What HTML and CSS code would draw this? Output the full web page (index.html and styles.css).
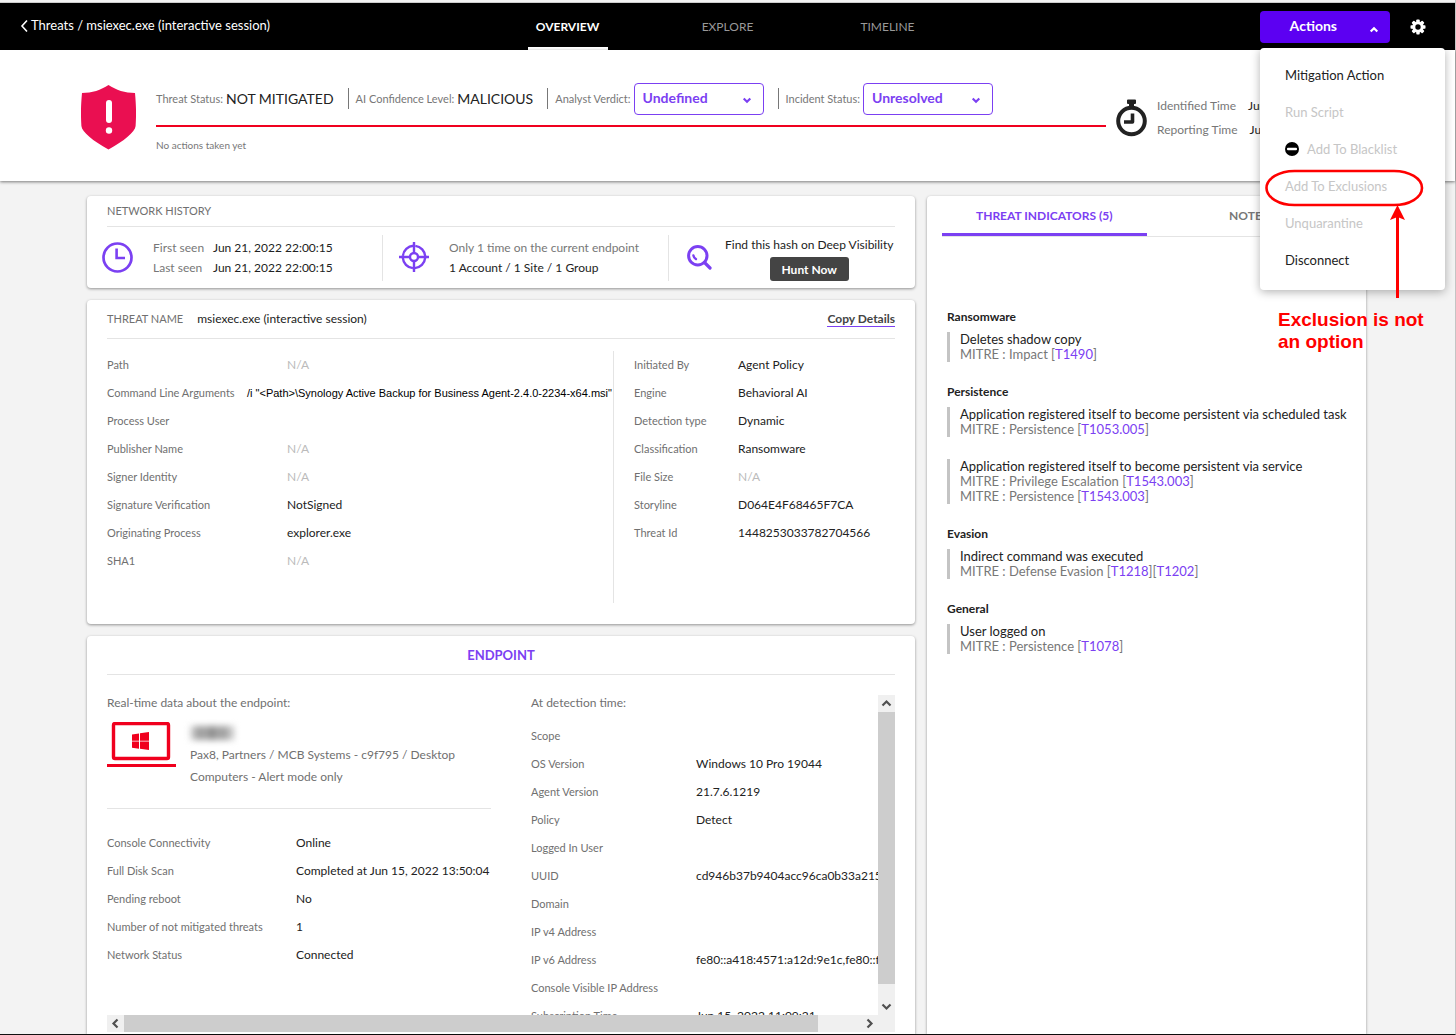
FILE: index.html
```html
<!DOCTYPE html>
<html lang="en">
<head>
    <meta charset="UTF-8">
    <title>Threats / msiexec.exe (interactive session)</title>
    <meta name="viewport" content="width=device-width">
    <link rel="stylesheet" href="styles.css">
</head>
<body>
    <div class="page">
        <header class="topbar">
            <a class="breadcrumb" href="#">
                <svg width="8" height="14" viewBox="0 0 8 14"><path d="M7 1.5 2 7l5 5.5" fill="none" stroke="#fff" stroke-width="1.6"/></svg>
                <span>Threats / msiexec.exe (interactive session)</span>
            </a>
            <nav class="main-tabs">
                <a class="active" href="#overview">OVERVIEW</a>
                <a href="#explore">EXPLORE</a>
                <a href="#timeline">TIMELINE</a>
            </nav>
            <div class="tools">
                <div class="actions">
                    <button class="actions-btn" type="button">
                        <span>Actions</span>
                        <svg width="10" height="7" viewBox="0 0 10 7"><path d="M1.7 5.5 5 2.3l3.3 3.2" fill="none" stroke="#fff" stroke-width="2.2"/></svg>
                    </button>
                    <div class="menu">
                        <button type="button">Mitigation Action</button>
                        <button type="button" disabled>Run Script</button>
                        <button type="button" disabled>
                            <svg width="14" height="14" viewBox="0 0 14 14"><circle cx="7" cy="7" r="7" fill="#000"/><rect x="2" y="5.7" width="10" height="2.6" rx="1" fill="#fff"/></svg>
                            Add To Blacklist
                        </button>
                        <button type="button" disabled>Add To Exclusions</button>
                        <button type="button" disabled>Unquarantine</button>
                        <button type="button">Disconnect</button>
                        <!-- callout drawn over the menu -->
                        <svg class="callout" width="160" height="132" viewBox="0 0 160 132" fill="none" stroke="#f00">
                            <rect x="1.5" y="2" width="155.500" height="34" rx="28" ry="17" stroke-width="2.600"/>
                            <path d="M132.500 129V48" stroke-width="3"/>
                            <path d="M132.500 36l7.500 15-7.500-3-7.500 3z" fill="#f00" stroke="none"/>
                        </svg>
                        <p class="callout-text">Exclusion is not<br>an option</p>
                    </div>
                </div>
                <button class="gear" type="button" aria-label="Settings">
                    <svg width="16" height="16" viewBox="0 0 16 16">
                        <g fill="#fff">
                            <rect x="6.3" y=".5" width="3.4" height="15" rx=".8"/>
                            <rect x="6.3" y=".5" width="3.4" height="15" rx=".8" transform="rotate(45 8 8)"/>
                            <rect x="6.3" y=".5" width="3.4" height="15" rx=".8" transform="rotate(90 8 8)"/>
                            <rect x="6.3" y=".5" width="3.4" height="15" rx=".8" transform="rotate(135 8 8)"/>
                            <circle cx="8" cy="8" r="5.7"/>
                        </g>
                        <circle cx="8" cy="8" r="2.7" fill="#000"/>
                    </svg>
                </button>
            </div>
        </header>

        <section class="summary">
            <svg class="shield" width="55" height="65" viewBox="0 0 55 65">
                <path d="M27.5 0C20 5 11 8 1 8c-1.200 13-1.300 22-.6 33C1 47 12 56 27.500 64.500 43 56 54 47 54.600 41c.7-11 .6-20-.6-33C44 8 35 5 27.500 0z" fill="#ea0f51"/>
                <rect x="25" y="15" width="6" height="23" rx="3" fill="#fff"/>
                <circle cx="28" cy="45.500" r="3.200" fill="#fff"/>
            </svg>
            <div class="status">
                <div class="status-row">
                    <div class="status-item"><span>Threat Status:</span><strong>NOT MITIGATED</strong></div>
                    <div class="status-item"><span>AI Confidence Level:</span><strong>MALICIOUS</strong></div>
                    <div class="status-item">
                        <label for="verdict">Analyst Verdict:</label>
                        <div class="select">
                            <select id="verdict"><option>Undefined</option><option>True positive</option></select>
                            <svg width="10" height="7" viewBox="0 0 10 7"><path d="M1.7 1.5 5 4.7l3.3-3.2" fill="none" stroke="#7b40f2" stroke-width="2.2"/></svg>
                        </div>
                    </div>
                    <div class="status-item">
                        <label for="incident">Incident Status:</label>
                        <div class="select">
                            <select id="incident"><option>Unresolved</option><option>Resolved</option></select>
                            <svg width="10" height="7" viewBox="0 0 10 7"><path d="M1.7 1.5 5 4.7l3.3-3.2" fill="none" stroke="#7b40f2" stroke-width="2.2"/></svg>
                        </div>
                    </div>
                </div>
                <p class="taken">No actions taken yet</p>
            </div>
            <div class="times">
                <svg width="31" height="38" viewBox="0 0 31 38">
                    <path d="M12 .5h7q1 0 1 1V4q0 1-1 1h-1v3h-5V5h-1q-1 0-1-1V1.500q0-1 1-1z" fill="#222"/>
                    <circle cx="15.500" cy="22" r="13.300" fill="none" stroke="#222" stroke-width="4"/>
                    <path d="M16.500 14.500V23H8" fill="none" stroke="#222" stroke-width="3.600" stroke-linejoin="round"/>
                </svg>
                <dl>
                    <div><dt>Identified Time</dt><dd>Jun 21, 2022 22:00:15</dd></div>
                    <div><dt>Reporting Time</dt><dd>Jun 21, 2022 22:00:15</dd></div>
                </dl>
            </div>
        </section>

        <main class="content">
            <div class="column">
                <section class="card network">
                    <h2 class="card-title">NETWORK HISTORY</h2>
                    <div class="network-row">
                        <div class="network-item">
                            <svg width="31" height="31" viewBox="0 0 31 31" fill="none" stroke="#7b40f2">
                                <circle cx="15.500" cy="15.500" r="14" stroke-width="2.700"/>
                                <path d="M14.600 6.500V16H23" stroke-width="2.600"/>
                            </svg>
                            <dl class="seen">
                                <dt>First seen</dt><dd>Jun 21, 2022 22:00:15</dd>
                                <dt>Last seen</dt><dd>Jun 21, 2022 22:00:15</dd>
                            </dl>
                        </div>
                        <div class="network-item">
                            <svg width="30" height="30" viewBox="0 0 30 30" fill="none" stroke="#7b40f2" stroke-width="2.400">
                                <circle cx="15" cy="15" r="11.200" stroke-dasharray="15.600 2" stroke-dashoffset="-1"/>
                                <circle cx="15" cy="15" r="4"/>
                                <path d="M15 0v11M15 19v11M0 15h11M19 15h11"/>
                            </svg>
                            <p>Only 1 time on the current endpoint<br><b>1 Account / 1 Site / 1 Group</b></p>
                        </div>
                        <div class="network-item hunt">
                            <svg width="25" height="25" viewBox="0 0 25 25" fill="none" stroke="#7b40f2" stroke-linecap="round">
                                <circle cx="10.800" cy="10.800" r="9.200" stroke-width="3"/>
                                <path d="M17.500 17.500l5.500 5.500" stroke-width="3.200"/>
                                <path d="M6.400 10.500q.5 2.500 2.600 3.600" stroke-width="2.400"/>
                            </svg>
                            <div>
                                <p>Find this hash on Deep Visibility</p>
                                <button type="button">Hunt Now</button>
                            </div>
                        </div>
                    </div>
                </section>

                <section class="card threat">
                    <div class="threat-head">
                        <h2>THREAT NAME</h2>
                        <span>msiexec.exe (interactive session)</span>
                        <a href="#copy">Copy Details</a>
                    </div>
                    <div class="threat-body">
                        <dl class="fields file-fields">
                            <div><dt>Path</dt><dd class="na">N/A</dd></div>
                            <div class="command"><dt>Command Line Arguments</dt><dd>/i "&lt;Path&gt;\Synology Active Backup for Business Agent-2.4.0-2234-x64.msi"</dd></div>
                            <div><dt>Process User</dt><dd></dd></div>
                            <div><dt>Publisher Name</dt><dd class="na">N/A</dd></div>
                            <div><dt>Signer Identity</dt><dd class="na">N/A</dd></div>
                            <div><dt>Signature Verification</dt><dd>NotSigned</dd></div>
                            <div><dt>Originating Process</dt><dd>explorer.exe</dd></div>
                            <div><dt>SHA1</dt><dd class="na">N/A</dd></div>
                        </dl>
                        <dl class="fields engine-fields">
                            <div><dt>Initiated By</dt><dd>Agent Policy</dd></div>
                            <div><dt>Engine</dt><dd>Behavioral AI</dd></div>
                            <div><dt>Detection type</dt><dd>Dynamic</dd></div>
                            <div><dt>Classification</dt><dd>Ransomware</dd></div>
                            <div><dt>File Size</dt><dd class="na">N/A</dd></div>
                            <div><dt>Storyline</dt><dd>D064E4F68465F7CA</dd></div>
                            <div><dt>Threat Id</dt><dd>1448253033782704566</dd></div>
                        </dl>
                    </div>
                </section>

                <section class="card endpoint">
                    <h2>ENDPOINT</h2>
                    <div class="scroller">
                        <div class="scroll-view">
                            <div class="realtime">
                                <h3>Real-time data about the endpoint:</h3>
                                <div class="machine">
                                    <svg width="69" height="46" viewBox="0 0 69 46">
                                        <rect x="6.500" y="1.500" width="55" height="35" rx="1.500" fill="none" stroke="#f0001e" stroke-width="3.400"/>
                                        <rect y="42" width="69" height="3" fill="#f0001e"/>
                                        <path d="M25 12.500l7-1v7.200h-7zM33 11.300l9-1.300v8.700h-9zM25 19.500h7v7.200l-7-1zM33 19.500h9V28l-9-1.300z" fill="#f0001e"/>
                                    </svg>
                                    <div>
                                        <span class="redacted"></span>
                                        <p>Pax8, Partners / MCB Systems - c9f795 / Desktop Computers - Alert mode only</p>
                                    </div>
                                </div>
                                <dl class="fields console-fields">
                                    <div><dt>Console Connectivity</dt><dd>Online</dd></div>
                                    <div><dt>Full Disk Scan</dt><dd>Completed at Jun 15, 2022 13:50:04</dd></div>
                                    <div><dt>Pending reboot</dt><dd>No</dd></div>
                                    <div><dt>Number of not mitigated threats</dt><dd>1</dd></div>
                                    <div><dt>Network Status</dt><dd>Connected</dd></div>
                                </dl>
                            </div>
                            <div class="detection">
                                <h3>At detection time:</h3>
                                <dl class="fields detection-fields">
                                    <div><dt>Scope</dt><dd></dd></div>
                                    <div><dt>OS Version</dt><dd>Windows 10 Pro 19044</dd></div>
                                    <div><dt>Agent Version</dt><dd>21.7.6.1219</dd></div>
                                    <div><dt>Policy</dt><dd>Detect</dd></div>
                                    <div><dt>Logged In User</dt><dd></dd></div>
                                    <div><dt>UUID</dt><dd>cd946b37b9404acc96ca0b33a215</dd></div>
                                    <div><dt>Domain</dt><dd></dd></div>
                                    <div><dt>IP v4 Address</dt><dd></dd></div>
                                    <div><dt>IP v6 Address</dt><dd>fe80::a418:4571:a12d:9e1c,fe80::f</dd></div>
                                    <div><dt>Console Visible IP Address</dt><dd></dd></div>
                                    <div><dt>Subscription Time</dt><dd>Jun 15, 2022 11:09:21</dd></div>
                                </dl>
                            </div>
                        </div>
                        <div class="bar vertical">
                            <svg width="17" height="17" viewBox="0 0 17 17"><path d="M4.500 10.500l4-4 4 4" fill="none" stroke="#505050" stroke-width="2.200"/></svg>
                            <div class="thumb"></div>
                            <svg width="17" height="17" viewBox="0 0 17 17"><path d="M4.500 6.500l4 4 4-4" fill="none" stroke="#505050" stroke-width="2.200"/></svg>
                        </div>
                        <div class="bar horizontal">
                            <svg width="17" height="17" viewBox="0 0 17 17"><path d="M10.500 4.500l-4 4 4 4" fill="none" stroke="#505050" stroke-width="2.200"/></svg>
                            <div class="thumb"></div>
                            <svg width="17" height="17" viewBox="0 0 17 17"><path d="M6.500 4.500l4 4-4 4" fill="none" stroke="#505050" stroke-width="2.200"/></svg>
                        </div>
                    </div>
                </section>
            </div>

            <section class="card indicators">
                <nav class="side-tabs">
                    <a class="active" href="#indicators">THREAT INDICATORS (5)</a>
                    <a href="#notes">NOTES</a>
                </nav>
                <div class="indicator-list">
                    <h3>Ransomware</h3>
                    <div class="indicator">
                        <p>Deletes shadow copy</p>
                        <p class="mitre">MITRE : Impact [<a href="#T1490">T1490</a>]</p>
                    </div>
                    <h3>Persistence</h3>
                    <div class="indicator">
                        <p>Application registered itself to become persistent via scheduled task</p>
                        <p class="mitre">MITRE : Persistence [<a href="#T1053">T1053.005</a>]</p>
                    </div>
                    <div class="indicator">
                        <p>Application registered itself to become persistent via service</p>
                        <p class="mitre">MITRE : Privilege Escalation [<a href="#T1543">T1543.003</a>]</p>
                        <p class="mitre">MITRE : Persistence [<a href="#T1543">T1543.003</a>]</p>
                    </div>
                    <h3>Evasion</h3>
                    <div class="indicator">
                        <p>Indirect command was executed</p>
                        <p class="mitre">MITRE : Defense Evasion [<a href="#T1218">T1218</a>][<a href="#T1202">T1202</a>]</p>
                    </div>
                    <h3>General</h3>
                    <div class="indicator">
                        <p>User logged on</p>
                        <p class="mitre">MITRE : Persistence [<a href="#T1078">T1078</a>]</p>
                    </div>
                </div>
            </section>
        </main>
    </div>
</body>
</html>
```
FILE: styles.css
```css
*{
    box-sizing: border-box;
}
body{
    margin: 0;
    background-color: #f3f3f3;
    color: #222;
    font-family: Lato, sans-serif;
    font-size: 12px;
    line-height: 16px;
}
h2, h3, p, dl, dd{
    margin: 0;
    font-size: inherit;
    font-weight: normal;
}
a{
    color: inherit;
    text-decoration: none;
}
button, select{
    font-family: inherit;
    font-size: inherit;
    border: 0;
}
svg{
    display: block;
    flex: none;
}
.page{
    min-height: 100vh;
    display: flex;
    flex-direction: column;
    padding-top: 2px;
    border-right: 1px solid #c4c4c4;
    border-bottom: 1px solid #111;
}

/* top bar */
.topbar{
    display: grid;
    grid-template-columns: 1fr auto 1fr;
    height: 48px;
    padding: 0 20px;
    border-top: 1px solid #ccc;
    background-color: #000;
    color: #fff;
}
.breadcrumb{
    display: flex;
    align-items: center;
    gap: 3px;
    padding-bottom: 4px;
    font-size: 13px;
}
.breadcrumb svg{
    margin-top: 2px;
}
.main-tabs{
    display: flex;
    gap: 80px;
}
.main-tabs a{
    width: 80px;
    color: #999;
    line-height: 47px;
    text-align: center;
}
.main-tabs .active{
    box-shadow: inset 0 -3px #fff;
    color: #fff;
    font-weight: bold;
}
.tools{
    display: flex;
    justify-content: flex-end;
    align-items: flex-start;
    gap: 20px;
    padding: 8px 9px 0 0;
}
.actions{
    position: relative;
}
.actions-btn{
    display: flex;
    align-items: center;
    justify-content: flex-end;
    gap: 32px;
    width: 130px;
    height: 32px;
    padding: 0 11px 3px 0;
    border-radius: 4px;
    background-color: #5c00f2;
    color: #fff;
    font-size: 14px;
    font-weight: bold;
}
.actions-btn svg{
    margin-top: 7px;
}
.gear{
    padding: 8px 0 0;
    background: none;
}
.menu{
    position: absolute;
    z-index: 10;
    top: 37px;
    left: 0;
    width: 185px;
    padding: 8px 0 12px;
    border-radius: 4px;
    background-color: #fff;
    box-shadow: 0 2px 10px rgba(0,0,0,0.3);
}
.menu button{
    display: flex;
    align-items: center;
    gap: 8px;
    width: 100%;
    height: 37px;
    padding: 0 25px;
    background: none;
    color: #222;
    font-size: 13px;
}
.menu button:disabled{
    color: #c6c6c6;
}
.callout{
    position: absolute;
    top: 121px;
    left: 5px;
}
.callout-text{
    position: absolute;
    top: 261px;
    left: 18px;
    color: #f00;
    font: bold 19px/22px "Liberation Sans", sans-serif;
    white-space: nowrap;
}

/* threat summary */
.summary{
    display: flex;
    height: 131px;
    padding: 33px 84px 0 81px;
    background-color: #fff;
    box-shadow: 0 1px 3px rgba(0,0,0,0.5);
}
.shield{
    margin: 2px 20px 0 0;
}
.status{
    flex: 1;
}
.status-row{
    display: flex;
    align-items: flex-start;
    height: 44px;
    border-bottom: 2px solid #f0001e;
}
.status-item{
    display: flex;
    align-items: center;
    gap: 3px;
    height: 21px;
    margin-top: 5px;
    color: #777;
    font-size: 11px;
}
.status-item + .status-item{
    margin-left: 14px;
    padding-left: 7px;
    border-left: 1px solid #777;
}
.status-item strong{
    color: #222;
    font-size: 14px;
    font-weight: normal;
}
.select{
    position: relative;
}
.select select{
    display: block;
    appearance: none;
    width: 130px;
    height: 32px;
    padding: 0 30px 2px 8px;
    border: 1px solid #7b40f2;
    border-radius: 4px;
    background-color: #fff;
    color: #7b40f2;
    font-size: 14px;
    font-weight: bold;
}
.select svg{
    position: absolute;
    top: 14px;
    right: 12px;
    pointer-events: none;
}
.taken{
    margin-top: 10px;
    color: #777;
    font-size: 10px;
}
.times{
    display: flex;
    gap: 10px;
    width: 265px;
    padding: 16px 0 0 10px;
}
.times dl{
    margin-top: -5px;
}
.times dl div{
    display: flex;
    gap: 12px;
    line-height: 24px;
    white-space: nowrap;
}
.times dt{
    color: #777;
}

/* cards */
.content{
    flex: 1;
    display: grid;
    grid-template-columns: 828fr 439fr;
    gap: 12px;
    padding: 15px 89px 0 87px;
}
.column{
    display: flex;
    flex-direction: column;
    gap: 12px;
    min-width: 0;
}
.card{
    border-radius: 4px;
    background-color: #fff;
    box-shadow: 0 1px 3px rgba(0,0,0,0.4);
}
.card-title{
    margin: 0 20px;
    border-bottom: 1px solid #e4e4e4;
    color: #707070;
    font-size: 11px;
    line-height: 30px;
}
.network-row{
    display: grid;
    grid-template-columns: 280fr 286fr 232fr;
    padding: 8px 15px 7px;
}
.network-item{
    display: flex;
    align-items: center;
    gap: 20px;
    height: 46px;
    color: #777;
    line-height: 20px;
}
.network-item svg{
    margin-bottom: 2px;
}
.network-item + .network-item{
    padding-left: 16px;
    border-left: 1px solid #e4e4e4;
}
.network-item b, .seen dd{
    color: #222;
    font-weight: normal;
}
.seen{
    display: grid;
    grid-template-columns: 60px auto;
}
.network-item.hunt{
    gap: 13px;
    padding-left: 18px;
    color: #222;
    white-space: nowrap;
}
.hunt div{
    display: flex;
    flex-direction: column;
    align-items: center;
    gap: 2px;
}
.hunt button{
    width: 79px;
    height: 24px;
    border-radius: 3px;
    background-color: #444;
    color: #fff;
    font-weight: bold;
}

.threat{
    padding: 0 20px 21px;
}
.threat-head{
    display: flex;
    align-items: center;
    gap: 14px;
    height: 39px;
    border-bottom: 1px solid #e4e4e4;
}
.threat-head h2{
    color: #707070;
    font-size: 11px;
}
.threat-head a{
    margin-left: auto;
    border-bottom: 1px solid #7b40f2;
    color: #444;
    font-weight: bold;
    line-height: 15px;
}
.threat-body{
    display: grid;
    grid-template-columns: 507fr 281fr;
    margin-top: 12px;
}
.fields div{
    display: flex;
    line-height: 28px;
    height: 28px;
    white-space: nowrap;
}
.fields dt{
    flex: none;
    color: #707070;
    font-size: 11px;
}
.fields .na{
    color: #bbb;
}
.file-fields{
    height: 252px;
    border-right: 1px solid #e4e4e4;
}
.file-fields dt{
    width: 180px;
}
.file-fields .command dt{
    width: 140px;
}
.command dd{
    color: #000;
    font-family: "Liberation Sans", sans-serif;
    font-size: 11px;
}
.engine-fields{
    padding-left: 20px;
}
.engine-fields dt{
    width: 104px;
}

.endpoint{
    flex: 1;
    padding: 0 20px 2px;
    border-radius: 4px 4px 0 0;
}
.endpoint h2{
    border-bottom: 1px solid #e4e4e4;
    color: #7b40f2;
    font-size: 13px;
    font-weight: bold;
    line-height: 38px;
    text-align: center;
}
.scroller{
    display: grid;
    grid-template-columns: minmax(0, 1fr) 17px;
    margin-top: 20px;
}
.scroll-view{
    display: flex;
    gap: 40px;
    height: 320px;
    overflow: hidden;
}
.scroll-view h3{
    margin-bottom: 11px;
    color: #707070;
}
.realtime{
    flex: none;
    width: 384px;
}
.detection{
    flex: 1;
    min-width: 0;
}
.machine{
    display: flex;
    gap: 14px;
    padding-bottom: 20px;
    border-bottom: 1px solid #e4e4e4;
    color: #707070;
    line-height: 22px;
}
.redacted{
    display: block;
    width: 44px;
    height: 14px;
    margin: 4px 0;
    background: linear-gradient(90deg, #ddd, #999 20%, #aaa 35%, #888 50%, #aaa 65%, #999 80%, #ccc 90%, #bbb);
    filter: blur(3px);
}
.console-fields{
    margin-top: 20px;
}
.console-fields dt{
    width: 189px;
}
.detection-fields dt{
    width: 165px;
}
.bar{
    display: flex;
    background-color: #f0f0f0;
}
.bar .thumb{
    background-color: #cdcdcd;
}
.vertical{
    flex-direction: column;
    justify-content: space-between;
}
.vertical .thumb{
    flex: 0 0 85%;
    margin-bottom: auto;
}
.horizontal{
    grid-column: 1 / -1;
    padding-right: 17px;
}
.horizontal .thumb{
    flex: 0 0 90%;
    margin-right: auto;
}

/* indicators */
.indicators{
    border-radius: 4px 4px 0 0;
}
.side-tabs{
    display: flex;
    margin: 0 15px;
    border-bottom: 1px solid #e4e4e4;
}
.side-tabs a{
    flex: 1;
    height: 40px;
    color: #777;
    font-weight: bold;
    line-height: 40px;
    text-align: center;
}
.side-tabs .active{
    border-bottom: 3px solid #7b40f2;
    color: #7b40f2;
}
.indicator-list{
    padding: 72px 12px 0 20px;
}
.indicator-list h3{
    margin-bottom: 7px;
    font-weight: bold;
}
.indicator{
    margin-bottom: 22px;
    padding-left: 10px;
    border-left: 3px solid #c4c4c4;
    font-size: 13px;
    line-height: 15px;
}
.mitre{
    color: #777;
}
.mitre a{
    color: #7b40f2;
}
```
